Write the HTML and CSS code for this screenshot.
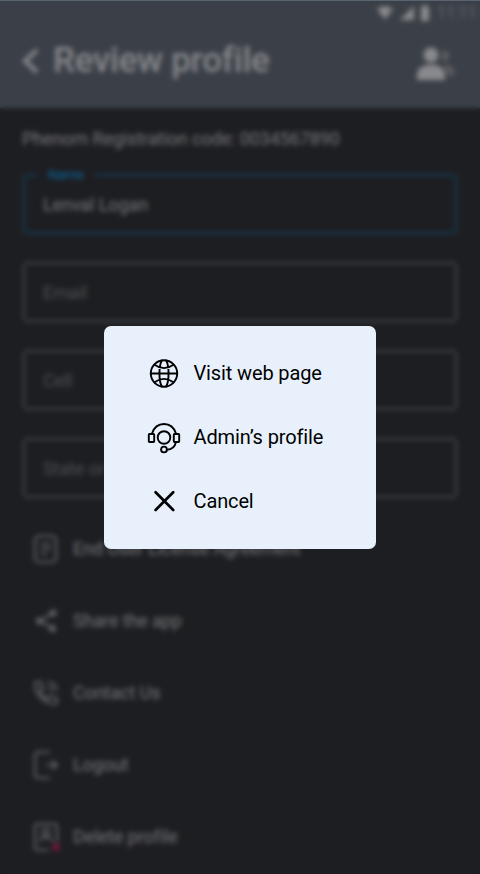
FILE: index.html
```html
<!DOCTYPE html>
<html lang="en">
<head>
<meta charset="utf-8">
<title>Review profile</title>
<link rel="stylesheet" href="styles.css">
</head>
<body>
<div class="app">
  <header class="header">
    <div class="status">
      <svg width="18" height="16" viewBox="0 0 18 16"><path d="M1 4Q9-1.500 17 4L9 14.500Z"/></svg>
      <svg width="16" height="16" viewBox="0 0 16 16"><path d="M1 15L15 1V15Z"/></svg>
      <svg width="10" height="16" viewBox="0 0 10 16"><path d="M1 2H3V0H7V2H9V16H1Z"/></svg>
      <span class="time">11:11</span>
    </div>
    <div class="bar">
      <svg class="back" width="20" height="28" viewBox="0 0 20 28"><path d="M17 3L5 14L17 25"/></svg>
      <h1>Review profile</h1>
      <svg class="people" width="40" height="36" viewBox="0 0 40 36">
        <circle cx="14" cy="9" r="7.500"/><path d="M0 34V29C0 22 7 18.500 14 18.500S28 22 28 29V34Z"/>
        <path class="faint" d="M25 5.500A5 5 0 1 1 25 14.500ZM27 18Q36 19 38 27L34 30L30 28Z"/>
      </svg>
    </div>
  </header>
  <main>
    <p class="code">Phenom Registration code: 0034567890</p>
    <div class="field active"><span class="label">Name</span>Lenval Logan</div>
    <div class="field">Email</div>
    <div class="field">Cell</div>
    <div class="field">State or region</div>
    <nav class="links">
      <div class="link"><svg viewBox="0 0 26 30"><rect x="2" y="2" width="21" height="26" rx="4"/><path d="M8 10H18M8 15H18M8 20H14"/></svg><span>End User License Agreement</span></div>
      <div class="link"><svg viewBox="0 0 26 30"><path d="M20 7L7 15L19 22"/><g class="solid"><circle cx="20" cy="7" r="2.500"/><circle cx="6.500" cy="15" r="2.500"/><circle cx="19.500" cy="22.500" r="2.500"/></g></svg><span>Share the app</span></div>
      <div class="link"><svg viewBox="0 0 26 30"><path d="M2 6Q2 4 4 4H8L10 11L7 13Q10 19 15 21L17 18L24 20V24Q24 26 21 26C11 25 2 17 2 6ZM15 4Q23 5 24 13M15 9Q19 10 19 14"/></svg><span>Contact Us</span></div>
      <div class="link"><svg viewBox="0 0 26 30"><path d="M17 2H6Q2 2 2 6V24Q2 28 6 28H17M13 15H24M19 10.500L24 15L19 19.500"/></svg><span>Logout</span></div>
      <div class="link"><svg viewBox="0 0 26 30"><path d="M16 28H5Q2 28 2 25V5Q2 2 5 2H21Q24 2 24 5V20M7 20Q8 15 13 15T19 20"/><circle cx="13" cy="10" r="3.500"/><path class="danger" d="M20 22L26 28M26 22L20 28"/></svg><span>Delete profile</span></div>
    </nav>
  </main>
</div>
<div class="overlay">
  <div class="dialog" role="dialog">
    <button class="option">
      <svg width="34" height="34" viewBox="0 0 34 34"><circle cx="17" cy="17.500" r="13.200"/><path d="M3.800 17.500H30.200M15 4.500C11.600 9 11.600 26 15 30.500M19 4.500C22.400 9 22.400 26 19 30.500M7.500 8.800Q17 15.500 26.500 8.800M7.500 26.200Q17 19.500 26.500 26.200"/></svg>
      <span>Visit web page</span>
    </button>
    <button class="option">
      <svg width="34" height="34" viewBox="0 0 34 34"><circle cx="17" cy="17.500" r="6.300"/><path d="M5 13.500C7 7.500 11.500 4 17 4S27 7.500 29 13.500M29 22C28 26.500 24.500 29.500 20 29.800"/><rect x="1.800" y="14" width="5.400" height="8" rx=".7"/><rect x="26.800" y="14" width="5.400" height="8" rx=".7"/><circle cx="17" cy="29.500" r="2.900"/></svg>
      <span>Admin’s profile</span>
    </button>
    <button class="option">
      <svg class="close" width="34" height="34" viewBox="0 0 34 34"><path d="M8.600 8.300L26.200 26M26.200 8.300L8.600 26"/></svg>
      <span>Cancel</span>
    </button>
  </div>
</div>
</body>
</html>
```
FILE: styles.css
```css
* { box-sizing: border-box; }
body { margin: 0; background: #1d1f23; font-family: Roboto, "Liberation Sans", sans-serif; }
.app { height: 874px; overflow: hidden; background: #1d1e22; color: #747578; letter-spacing: -.1px; }
.header { height: 108px; background: #3b4048; color: #86878b; fill: #88898c; }
.status { display: flex; align-items: center; height: 25px; padding: 0 8px 0 376px; gap: 5px; }
.status svg { flex: none; }
.time { margin-left: 2px; color: #62666d; font-size: 16px; line-height: 24px; }
.bar { display: flex; align-items: center; height: 72px; padding: 0 24px 0 20px; }
.back { fill: none; stroke: #88898c; stroke-width: 4; }
h1 { margin: 0 0 0 13px; font-size: 35px; line-height: 42px; font-weight: 500; letter-spacing: -.3px; white-space: nowrap; }
.people { margin: 6px -1px 0 auto; }
.faint { fill: #5d5d60; }
main { padding: 19px 23px 0; }
.code { margin: 0 0 24px -1px; font-size: 18px; line-height: 23px; white-space: nowrap; }
.field { position: relative; height: 60px; margin-bottom: 28px; padding-left: 18px; border: 2px solid #45474b; border-radius: 5px; font-size: 18px; line-height: 58px; color: #4c4e51; }
.active { border-color: #153e57; color: #747578; }
.label { position: absolute; top: -11px; left: 12px; padding: 0 11px; background: #1d1e22; color: #09679d; font-size: 13.5px; line-height: 18px; }
.links { margin-top: -13px; }
.link { display: flex; align-items: center; height: 72px; padding-left: 10px; font-size: 18px; }
.link span { padding-bottom: 2px; }
.link svg { width: 26px; height: 30px; margin-right: 14px; fill: none; stroke: #606165; stroke-width: 2.2; overflow: visible; }
.link .solid { fill: #606165; }
.link .danger { stroke: #86183f; stroke-width: 2.5; }
.overlay { position: fixed; inset: 0; display: flex; align-items: flex-start; justify-content: center; padding-top: 325px; border-top: 1px solid #58636f; backdrop-filter: blur(2.4px); }
.dialog { width: 272px; height: 223px; padding: 15px 0 0 42.5px; border-radius: 7px; background: #e8f1fb; }
.option { display: flex; align-items: center; width: 100%; height: 64px; padding: 0; border: 0; background: none; color: #000; font: 20px Roboto, sans-serif; letter-spacing: -.13px; text-align: left; white-space: nowrap; }
.option svg { margin-right: 13px; fill: none; stroke: #000; stroke-width: 1.9; stroke-linecap: round; stroke-linejoin: round; }
.option .close { stroke-width: 2.7; }
```
